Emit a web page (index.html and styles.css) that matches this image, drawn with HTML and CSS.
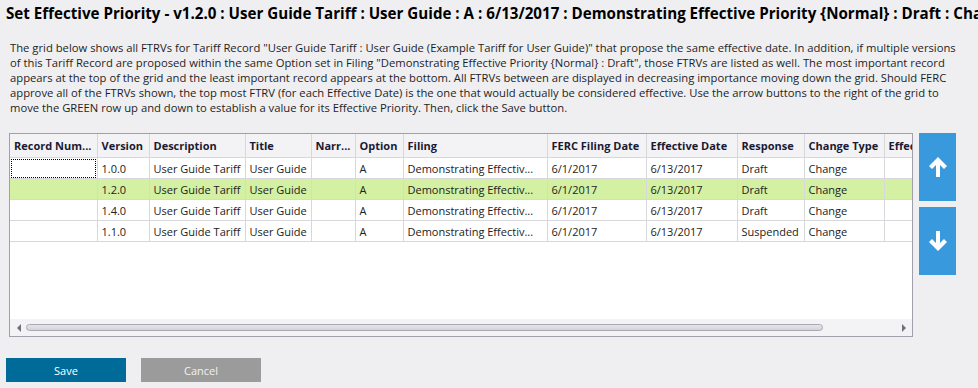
FILE: index.html
```html
<!DOCTYPE html>
<html lang="en">
<head>
<meta charset="UTF-8">
<title>Set Effective Priority</title>
<link rel="stylesheet" href="styles.css">
</head>
<body>
<div class="page">
    <h1 class="title">Set Effective Priority - v1.2.0 : User Guide Tariff : User Guide : A : 6/13/2017 : Demonstrating Effective Priority {Normal} : Draft : Change</h1>
    <p class="intro">The grid below shows all FTRVs for Tariff Record "User Guide Tariff : User Guide (Example Tariff for User Guide)" that propose the same effective date. In addition, if multiple versions<br>of this Tariff Record are proposed within the same Option set in Filing "Demonstrating Effective Priority {Normal} : Draft", those FTRVs are listed as well. The most important record<br>appears at the top of the grid and the least important record appears at the bottom. All FTRVs between are displayed in decreasing importance moving down the grid. Should FERC<br>approve all of the FTRVs shown, the top most FTRV (for each Effective Date) is the one that would actually be considered effective. Use the arrow buttons to the right of the grid to<br>move the GREEN row up and down to establish a value for its Effective Priority. Then, click the Save button.</p>

    <div class="grid-row">
        <div class="grid">
            <div class="grid-body">
                <table>
                    <colgroup>
                        <col style="width:87px">
                        <col style="width:52px">
                        <col style="width:96px">
                        <col style="width:66px">
                        <col style="width:44px">
                        <col style="width:48px">
                        <col style="width:144px">
                        <col style="width:99px">
                        <col style="width:91px">
                        <col style="width:67px">
                        <col style="width:80px">
                        <col style="width:90px">
                    </colgroup>
                    <thead>
                        <tr>
                            <th>Record Num...</th>
                            <th>Version</th>
                            <th>Description</th>
                            <th>Title</th>
                            <th>Narr...</th>
                            <th>Option</th>
                            <th>Filing</th>
                            <th>FERC Filing Date</th>
                            <th>Effective Date</th>
                            <th>Response</th>
                            <th>Change Type</th>
                            <th>Effective Priority</th>
                        </tr>
                    </thead>
                    <tbody>
                        <tr>
                            <td class="focus"></td>
                            <td>1.0.0</td>
                            <td>User Guide Tariff</td>
                            <td>User Guide</td>
                            <td></td>
                            <td>A</td>
                            <td>Demonstrating Effectiv...</td>
                            <td>6/1/2017</td>
                            <td>6/13/2017</td>
                            <td>Draft</td>
                            <td>Change</td>
                            <td></td>
                        </tr>
                        <tr class="green">
                            <td></td>
                            <td>1.2.0</td>
                            <td>User Guide Tariff</td>
                            <td>User Guide</td>
                            <td></td>
                            <td>A</td>
                            <td>Demonstrating Effectiv...</td>
                            <td>6/1/2017</td>
                            <td>6/13/2017</td>
                            <td>Draft</td>
                            <td>Change</td>
                            <td></td>
                        </tr>
                        <tr>
                            <td></td>
                            <td>1.4.0</td>
                            <td>User Guide Tariff</td>
                            <td>User Guide</td>
                            <td></td>
                            <td>A</td>
                            <td>Demonstrating Effectiv...</td>
                            <td>6/1/2017</td>
                            <td>6/13/2017</td>
                            <td>Draft</td>
                            <td>Change</td>
                            <td></td>
                        </tr>
                        <tr>
                            <td></td>
                            <td>1.1.0</td>
                            <td>User Guide Tariff</td>
                            <td>User Guide</td>
                            <td></td>
                            <td>A</td>
                            <td>Demonstrating Effectiv...</td>
                            <td>6/1/2017</td>
                            <td>6/13/2017</td>
                            <td>Suspended</td>
                            <td>Change</td>
                            <td></td>
                        </tr>
                    </tbody>
                </table>
            </div>
            <div class="hscroll">
                <span class="arrow-left"></span>
                <span class="thumb"></span>
                <span class="arrow-right"></span>
            </div>
        </div>
        <div class="movers">
            <button class="move" aria-label="Move up">
                <svg width="18" height="20" viewBox="0 0 18 20"><path d="M9 0 L18 9 L15 12 L11 8 L11 20 L7 20 L7 8 L3 12 L0 9 Z" fill="#fff"/></svg>
            </button>
            <button class="move" aria-label="Move down">
                <svg width="18" height="20" viewBox="0 0 18 20"><path d="M9 20 L18 11 L15 8 L11 12 L11 0 L7 0 L7 12 L3 8 L0 11 Z" fill="#fff"/></svg>
            </button>
        </div>
    </div>

    <div class="actions">
        <button class="btn save">Save</button>
        <button class="btn cancel">Cancel</button>
    </div>
</div>
</body>
</html>
```

FILE: styles.css
```css
html, body {
    margin: 0;
    padding: 0;
    background: #efeff2;
}
.page {
    width: 978px;
    height: 388px;
    overflow: hidden;
    font-family: "Open Sans", "Noto Sans", sans-serif;
    color: #1e1e1e;
}
.title {
    margin: 0;
    padding: 2px 0 0 6px;
    font-size: 15.15px;
    line-height: 22px;
    font-weight: 700;
    color: #000;
    white-space: nowrap;
    overflow: hidden;
}
.intro {
    margin: 16px 0 0 10px;
    font-size: 11.25px;
    line-height: 15px;
    white-space: nowrap;
}
.grid-row {
    display: flex;
    margin: 18px 0 0 9px;
    gap: 6px;
}
.grid {
    width: 902px;
    height: 202px;
    border: 1px solid #a0a0aa;
    background: #fff;
    display: flex;
    flex-direction: column;
    overflow: hidden;
}
.grid-body {
    flex: 1;
    overflow: hidden;
}
table {
    border-collapse: collapse;
    table-layout: fixed;
    width: 964px;
    font-size: 11px;
}
th, td {
    border-right: 1px solid #d7d7dc;
    border-bottom: 1px solid #d7d7dc;
    padding: 0 4px;
    text-align: left;
    white-space: nowrap;
    overflow: hidden;
}
th {
    height: 23px;
    background: #f3f3f5;
    color: #1a1a33;
    font-weight: 700;
}
td {
    height: 20px;
    color: #222;
}
td.focus {
    outline: 1px dotted #000;
    outline-offset: -2px;
}
tr.green td {
    background: #d3f0a3;
}
.hscroll {
    height: 17px;
    background: #f3f3f5;
    display: flex;
    align-items: center;
    padding: 0 6px 0 7px;
    gap: 5px;
}
.arrow-left {
    width: 0;
    height: 0;
    border-top: 4px solid transparent;
    border-bottom: 4px solid transparent;
    border-right: 4px solid #707078;
}
.arrow-right {
    width: 0;
    height: 0;
    margin-left: auto;
    border-top: 4px solid transparent;
    border-bottom: 4px solid transparent;
    border-left: 4px solid #707078;
}
.thumb {
    width: 795px;
    height: 5px;
    border: 1px solid #a8a8b0;
    border-radius: 4px;
    background: linear-gradient(#e6e6ea, #d2d2d8);
}
.movers {
    display: flex;
    flex-direction: column;
    gap: 6px;
}
.move {
    width: 37px;
    height: 68px;
    border: 0;
    padding: 0;
    background: #3899dc;
    display: flex;
    align-items: center;
    justify-content: center;
}
.actions {
    display: flex;
    gap: 15px;
    margin: 21px 0 0 6px;
}
.btn {
    width: 120px;
    height: 24px;
    border: 0;
    font-family: "Open Sans", "Noto Sans", sans-serif;
    font-size: 11px;
    color: #fff;
}
.save {
    background: #006b99;
}
.cancel {
    background: #9b9b9b;
    color: #f2f2f2;
}
```
